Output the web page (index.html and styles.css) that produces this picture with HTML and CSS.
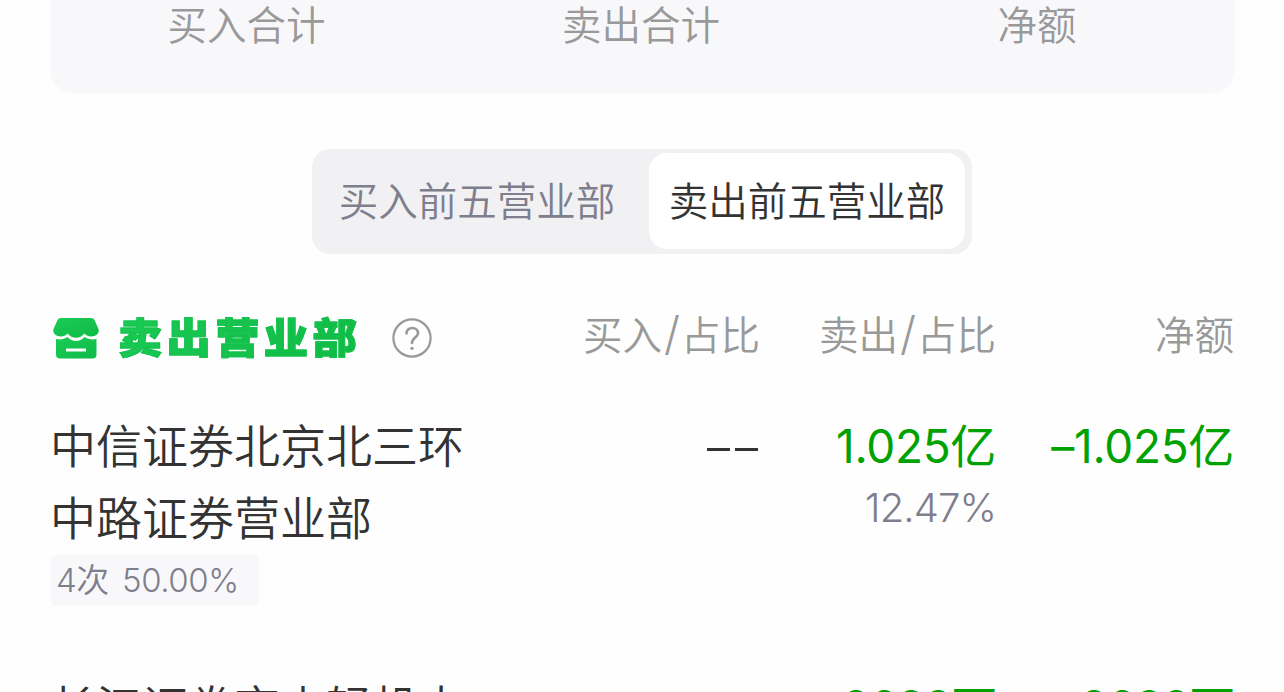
FILE: index.html
```
<!DOCTYPE html>
<html lang="zh-CN">
<head>
    <meta charset="UTF-8">
    <meta name="viewport" content="width=device-width, initial-scale=1.0">
    <title>卖出前五营业部</title>
    <link rel="stylesheet" href="styles.css">
</head>
<body>
    <div class="summary">
        <div class="summary-item">买入合计</div>
        <div class="summary-item">卖出合计</div>
        <div class="summary-item">净额</div>
    </div>

    <div class="tabs">
        <div class="tab">买入前五营业部</div>
        <div class="tab active">卖出前五营业部</div>
    </div>

    <div class="row head">
        <div class="title">
            <svg class="shop" width="46" height="42" viewBox="0 0 46 42">
                <defs>
                    <linearGradient id="green" x1="0" y1="0" x2="1" y2="1">
                        <stop offset="0" stop-color="#1acb55"/>
                        <stop offset="1" stop-color="#0fbb47"/>
                    </linearGradient>
                </defs>
                <path fill="url(#green)" d="M8 1H38Q40.500 1 41.500 3L45.500 12Q46.500 15 44 17.500Q42 19.500 38 19.500Q34 19.500 31.500 16.500Q28 20.700 23 20.700Q18 20.700 14.500 16.500Q12 19.500 8 19.500Q4 19.500 2 17.500Q-0.500 15 0.500 12L4.500 3Q5.500 1 8 1Z"/>
                <path fill="url(#green)" fill-rule="evenodd" d="M3 22Q10 23.500 14.500 20Q18 24 23 24Q28 24 31.500 20Q36 23.500 43.500 22V37.500Q43.500 41.500 39.500 41.500H7Q3 41.500 3 37.500ZM13 31.500V34.500H33V31.500Z"/>
            </svg>
            <span class="title-text">卖出营业部</span>
            <svg class="help" width="40" height="40" viewBox="0 0 40 40" fill="none" stroke="#999" stroke-linecap="round">
                <circle cx="20" cy="20" r="18.600" stroke-width="2.200"/>
                <path stroke-width="2.600" d="M14.500 15.500C14.500 12 17 10 20.200 10C23.500 10 26 12.200 26 15.200C26 19.500 20 19.700 20 25"/>
                <circle cx="20" cy="30.300" r="1.600" fill="#999" stroke="none"/>
            </svg>
        </div>
        <div class="label">买入<span class="slash">/</span>占比</div>
        <div class="label">卖出<span class="slash">/</span>占比</div>
        <div class="label">净额</div>
    </div>

    <div class="row">
        <div class="name">
            中信证券北京北三环<br>中路证券营业部
            <div class="tag">4次<span class="rate">50.00%</span></div>
        </div>
        <div class="num"><span class="dash"></span><span class="dash"></span></div>
        <div class="num green">1.025亿<div class="percent">12.47%</div></div>
        <div class="num green">–1.025亿</div>
    </div>

    <div class="row last">
        <div class="name">长江证券京山轻机大</div>
        <div class="num"></div>
        <div class="num green">9688万</div>
        <div class="num green">–9688万</div>
    </div>
</body>
</html>
```
FILE: styles.css
```
html {
    overflow: hidden;
}
body {
    margin: 0;
    padding: 0 50px;
    height: 692px;
    overflow: hidden;
    box-sizing: border-box;
    background: #fefefe;
    color: #333;
    font-family: Inter, "Noto Sans CJK SC", sans-serif;
    font-weight: 350;
}
.summary {
    display: grid;
    grid-template-columns: 393px 396px 396px;
    width: 1185px;
    height: 93px;
    border-radius: 0 0 24px 24px;
    background: #f8f8fb;
    color: #999;
    font-size: 39.500px;
    line-height: 52px;
    text-align: center;
}
.tabs {
    display: flex;
    justify-content: space-between;
    width: 660px;
    height: 105px;
    margin: 56px 0 0 262px;
    padding: 4px 7px 5px;
    box-sizing: border-box;
    border-radius: 18px;
    background: #f1f1f4;
}
.tab {
    width: 316px;
    border-radius: 18px;
    color: #7f7e8c;
    font-size: 39.500px;
    line-height: 99px;
    text-align: center;
    white-space: nowrap;
}
.tab.active {
    background: #fff;
    color: #333;
}
.row {
    display: grid;
    grid-template-columns: 474px 236px 236px 238px;
    width: 1184px;
    height: 261px;
}
.head {
    height: 110px;
    margin-top: 46px;
}
.last {
    height: 21px;
    overflow: hidden;
}
.title {
    display: flex;
    align-items: center;
    height: 76px;
}
.shop {
    margin-left: 3px;
}
.title-text {
    width: 226px;
    margin-left: 19px;
    font-size: 41px;
    font-weight: 900;
    letter-spacing: 4px;
    line-height: 60px;
    white-space: nowrap;
    background: linear-gradient(135deg, #1acb55, #0fb944);
    -webkit-background-clip: text;
    background-clip: text;
    -webkit-text-fill-color: transparent;
    -webkit-text-stroke: 1px #14c24c;
    transform: scaleX(1.080);
    transform-origin: left;
}
.help {
    margin-left: 48px;
}
.label {
    color: #999;
    font-size: 39.500px;
    line-height: 72px;
    text-align: right;
    white-space: nowrap;
}
.slash {
    padding: 0 1px 0 2px;
    font-size: 46px;
    line-height: 1;
}
.name {
    font-size: 46px;
    line-height: 72px;
    white-space: nowrap;
}
.tag {
    width: 209px;
    height: 51px;
    margin-top: 1px;
    padding-left: 6px;
    box-sizing: border-box;
    border-radius: 6px;
    background: #f8f8fb;
    color: #7f7e8c;
    font-size: 33px;
    line-height: 50px;
    letter-spacing: -0.400px;
}
.rate {
    margin-left: 13px;
}
.num {
    font-size: 46px;
    font-weight: 380;
    line-height: 72px;
    letter-spacing: -0.300px;
    text-align: right;
    white-space: nowrap;
}
.last .num {
    letter-spacing: -1.200px;
}
.green {
    color: #00a200;
}
.dash {
    display: inline-block;
    width: 23px;
    height: 3px;
    margin-left: 5px;
    vertical-align: 12px;
    background: #333;
}
.dash:last-child {
    margin-right: 2px;
}
.percent {
    margin-top: -10px;
    color: #7f7e8c;
    font-size: 40px;
    font-weight: 350;
    letter-spacing: -0.900px;
}
```
